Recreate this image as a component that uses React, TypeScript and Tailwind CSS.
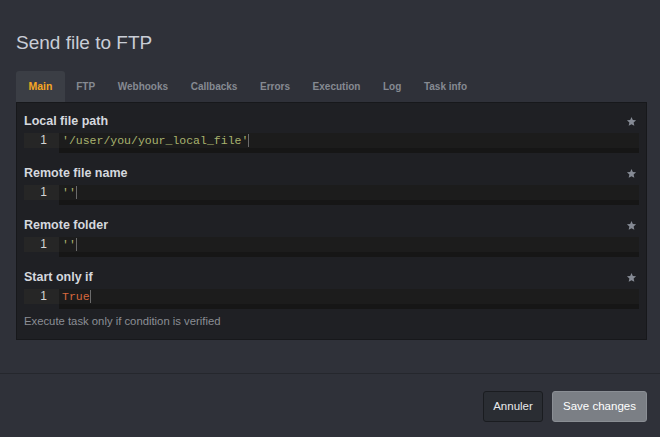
import React from "react";

const tabs = ["Main", "FTP", "Webhooks", "Callbacks", "Errors", "Execution", "Log", "Task info"];

type Field = { label: string; value: string; color: string; help?: string };

const fields: Field[] = [
  { label: "Local file path", value: "'/user/you/your_local_file'", color: "text-[#a9b36e]" },
  { label: "Remote file name", value: "''", color: "text-[#a9b36e]" },
  { label: "Remote folder", value: "''", color: "text-[#a9b36e]" },
  { label: "Start only if", value: "True", color: "text-[#d8683d]", help: "Execute task only if condition is verified" },
];

const Star = () => (
  <svg width="11" height="11" viewBox="0 0 24 24" className="fill-[#858a94]">
    <path d="M12 2l2.9 6.9 7.1.6-5.4 4.7 1.6 7.3L12 17.8 5.8 21.5l1.6-7.3L2 9.5l7.1-.6z" />
  </svg>
);

const Editor = ({ value, color }: { value: string; color: string }) => (
  <div className="flex h-[20px]">
    <div className="w-[35px] bg-[#262626] text-[#d4d4d4] text-[12px] font-['Liberation_Sans',Arial,sans-serif] text-right pr-[12px] leading-[15px] h-[15px] flex-none">
      1
    </div>
    <div className="flex-1 flex flex-col">
      <div className="h-[15px] bg-[#1c1c1c] flex items-center pl-[3px]">
        <span className={`${color} text-[11.5px] leading-[15px] font-['Liberation_Mono','Courier_New',monospace]`}>{value}</span>
        <span className="w-px h-[13px] bg-[#6b6b6b]"></span>
      </div>
      <div className="h-[5px] bg-[#161616]"></div>
    </div>
  </div>
);

export default function App() {
  return (
    <div className="w-[660px] h-[437px] bg-[#2f3139] font-['Liberation_Sans',Arial,sans-serif] flex flex-col overflow-hidden">
      <div className="pl-4 pr-[13px] pt-[31px] h-[374px] border-b border-[#25272d]">
        <h1 className="text-[19px] text-[#c9cdd6] leading-[24px]">Send file to FTP</h1>
        <div className="flex mt-[16px] h-[31px]">
          {tabs.map((t, i) => (
            <div
              key={t}
              className={
                i === 0
                  ? "px-[12.5px] flex items-center bg-[#3b3e45] rounded-t-[3px] text-[#f5a623] text-[10.5px] font-bold"
                  : "px-[11.3px] flex items-center text-[#868a92] text-[10px] font-bold"
              }
            >
              {t}
            </div>
          ))}
        </div>
        <div className="bg-[#1f2024] border border-[#17181b] h-[238px] px-[7px] pt-[10px]">
          {fields.map((f) => (
            <div key={f.label} className="h-[52px]">
              <div className="flex items-center justify-between h-[17px] pr-[2px]">
                <span className="text-[12.5px] font-bold text-[#d5d8de]">{f.label}</span>
                <Star />
              </div>
              <div className="mt-[3px]">
                <Editor value={f.value} color={f.color} />
              </div>
              {f.help && <div className="text-[11.3px] text-[#8b8e94] mt-[4px]">{f.help}</div>}
            </div>
          ))}
        </div>
      </div>
      <div className="flex justify-end gap-[9px] pr-[13px] pt-[17px]">
        <button className="h-[31px] w-[60px] bg-[#2a2d33] border border-[#1a1c20] rounded-[3px] text-[11.5px] text-[#e8e9eb]">
          Annuler
        </button>
        <button className="h-[31px] w-[95px] bg-[#7b7f85] border border-[#8a8e94] rounded-[3px] text-[11.5px] text-white">
          Save changes
        </button>
      </div>
    </div>
  );
}
